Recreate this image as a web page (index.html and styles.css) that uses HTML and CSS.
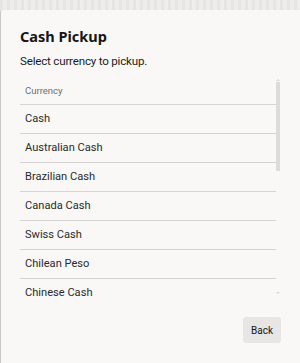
FILE: index.html
```html
<!DOCTYPE html>
<html lang="en">
<head>
  <meta charset="UTF-8">
  <meta name="viewport" content="width=device-width, initial-scale=1.0">
  <title>Cash Pickup</title>
  <link rel="stylesheet" href="styles.css">
</head>

<body>
  <div class="dialog">
    <h1 class="dialog-title">Cash Pickup</h1>
    <p class="dialog-text">Select currency to pickup.</p>

    <div class="list-wrap">
      <div class="list">
        <div class="list-header">Currency</div>
        <div class="row">Cash</div>
        <div class="row">Australian Cash</div>
        <div class="row">Brazilian Cash</div>
        <div class="row">Canada Cash</div>
        <div class="row">Swiss Cash</div>
        <div class="row">Chilean Peso</div>
        <div class="row">Chinese Cash</div>
      </div>
      <!-- drawn scrollbar, the headless browser hides native ones -->
      <div class="scrollbar">
        <span class="arrow arrow-up"></span>
        <span class="thumb"></span>
        <span class="arrow arrow-down"></span>
      </div>
    </div>

    <div class="dialog-footer">
      <button class="btn">Back</button>
    </div>
  </div>
</body>
</html>
```

FILE: styles.css
```css
* {
  box-sizing: border-box;
}

body {
  margin: 0;
  height: 363px;
  overflow: hidden;
  font-family: Roboto, "Noto Sans", Arial, sans-serif;
  color: #161513;
  background: repeating-linear-gradient(90deg, #e6e5e3 0 3px, #eeedeb 3px 7px);
}

.dialog {
  margin-top: 10px;
  height: 360px;
  background: #f9f8f6;
  border-left: 1px solid #c9c8c6;
  border-radius: 2px 0 0 4px;
  padding: 16px 19px 0 19px;
}

.dialog-title {
  margin: 0;
  font-family: "Noto Sans", Arial, sans-serif;
  font-size: 14.5px;
  font-weight: 700;
  line-height: 21px;
}

.dialog-text {
  margin: 6px 0 0;
  font-size: 11.6px;
  letter-spacing: -0.2px;
  line-height: 16px;
  color: #1c1b19;
}

.list-wrap {
  display: flex;
  margin-top: 9px;
  height: 222px;
}

.list {
  width: 256px;
  height: 100%;
  overflow: hidden;
}

.list-header {
  height: 27px;
  line-height: 25px;
  padding-left: 5px;
  font-size: 9.5px;
  color: #6f6e6c;
  border-bottom: 1px solid #d5d4d2;
}

.row {
  height: 29px;
  line-height: 28px;
  padding-left: 5px;
  font-size: 11.1px;
  color: #2b2a28;
  border-bottom: 1px solid #d5d4d2;
}

.scrollbar {
  width: 5px;
  padding: 1px 1px 6px 0;
  display: flex;
  flex-direction: column;
  align-items: center;
}

.arrow {
  width: 0;
  height: 0;
  border-left: 2px solid transparent;
  border-right: 2px solid transparent;
}

.arrow-up {
  border-bottom: 2px solid #d9d8d6;
}

.arrow-down {
  margin-top: auto;
  border-top: 2px solid #d9d8d6;
}

.thumb {
  width: 4px;
  height: 89px;
  margin-top: 1px;
  background: #dcdbd9;
}

.dialog-footer {
  display: flex;
  justify-content: flex-end;
  padding-top: 17px;
}

.btn {
  width: 38px;
  height: 26px;
  border: none;
  border-radius: 3px;
  background: #e7e6e4;
  font-family: inherit;
  font-size: 10px;
  color: #161513;
}
```
